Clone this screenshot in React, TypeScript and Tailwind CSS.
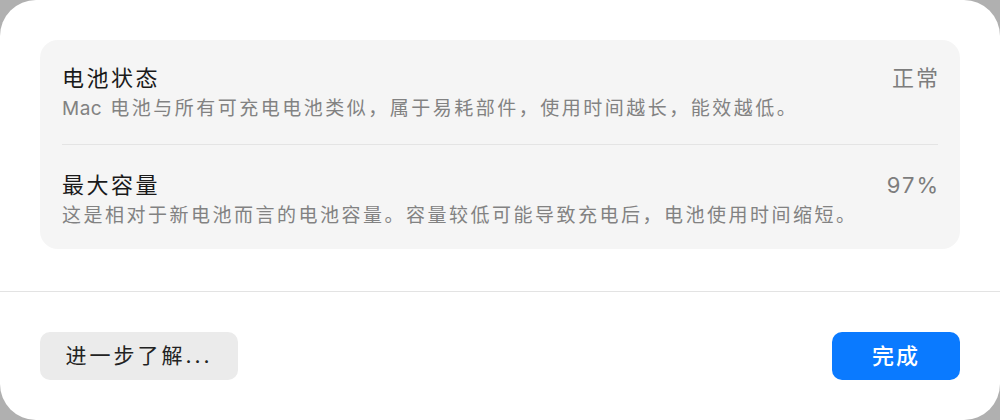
import React from 'react';

const rows = [
  {
    title: '电池状态',
    value: '正常',
    lead: 'Mac',
    desc: '电池与所有可充电电池类似，属于易耗部件，使用时间越长，能效越低。',
  },
  {
    title: '最大容量',
    value: '97%',
    lead: '',
    desc: '这是相对于新电池而言的电池容量。容量较低可能导致充电后，电池使用时间缩短。',
  },
];

const font = { fontFamily: 'Inter, "Noto Sans CJK SC", sans-serif' };

export default function App() {
  return (
    <div className="w-[1000px] h-[420px] bg-[#b0b0b0]" style={font}>
      <div className="h-full flex flex-col bg-white rounded-[36px] overflow-hidden">
        {/* Battery info card */}
        <div className="px-10 pt-10">
          <div className="bg-[#f5f5f5] rounded-[18px] px-[22px]">
            {rows.map((row, i) => (
              <div
                key={row.title}
                className={`flex items-start justify-between ${i === 0 ? 'pt-6 pb-[22px] border-b border-[#e4e4e4]' : 'pt-[26px] pb-[20px]'}`}
              >
                <div className="flex flex-col gap-[4px]">
                  <div className="text-[22px] leading-[28px] tracking-[2.5px] text-[#1a1a1a]">{row.title}</div>
                  <div className="text-[19px] leading-[26px] tracking-[2.5px] text-[#828282]">
                    {row.lead && <span className="tracking-[0.5px] mr-[8px]">{row.lead}</span>}
                    {row.desc}
                  </div>
                </div>
                <div className="text-[22px] leading-[28px] tracking-[2px] text-[#7d7d7d] -mr-[2px]">{row.value}</div>
              </div>
            ))}
          </div>
        </div>

        <div className="flex-1" />

        {/* Footer */}
        <div className="border-t border-[#e3e3e3] px-10 pt-10 pb-10 flex items-center justify-between">
          <button
            type="button"
            className="h-12 w-[198px] rounded-[10px] bg-[#ebebeb] text-[21px] tracking-[3px] text-[#222]"
          >
            进一步了解...
          </button>
          <button
            type="button"
            className="h-12 w-32 rounded-[10px] bg-[#0a7aff] text-[22px] tracking-[2px] font-medium text-white"
          >
            完成
          </button>
        </div>
      </div>
    </div>
  );
}
